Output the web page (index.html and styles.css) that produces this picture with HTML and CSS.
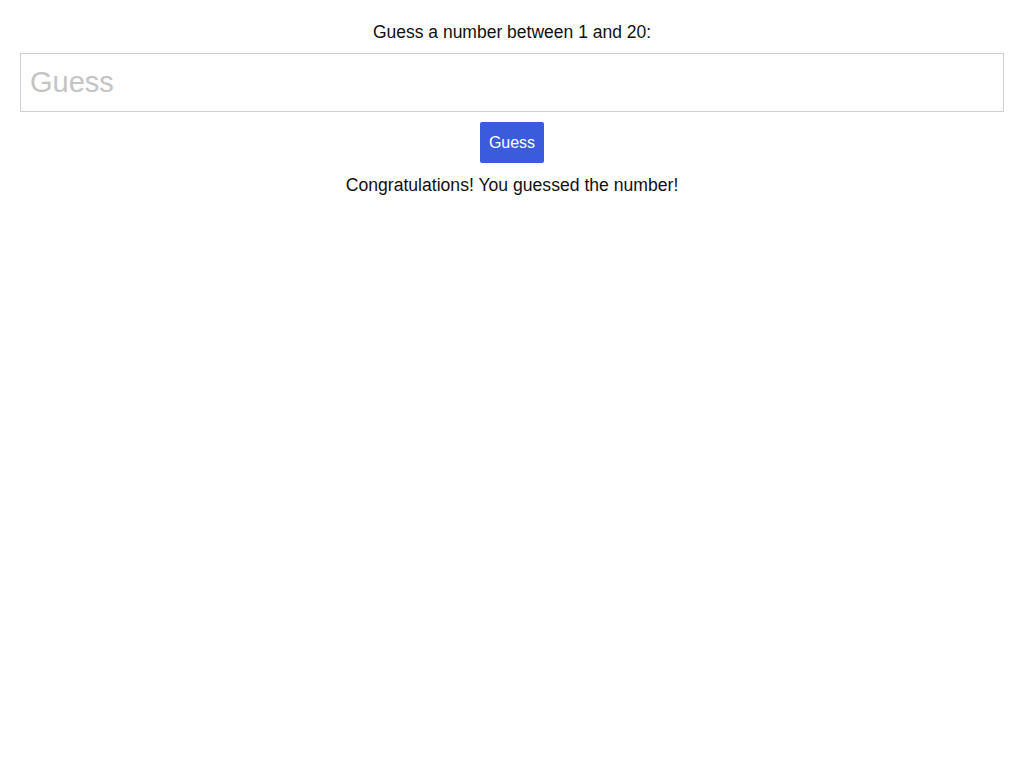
FILE: index.html
```html
<!DOCTYPE html>
<html>
<head>
<meta charset="utf-8">
<link rel="stylesheet" href="styles.css">
</head>
<body>
<div class="game">
  <p class="prompt">Guess a number between 1 and 20:</p>
  <input class="guess-input" type="text" placeholder="Guess">
  <button class="guess-btn">Guess</button>
  <p class="result">Congratulations! You guessed the number!</p>
</div>
</body>
</html>
```

FILE: styles.css
```css
html, body {
  margin: 0;
  padding: 0;
  background: #fff;
}
body {
  font-family: "Liberation Sans", Arial, sans-serif;
  color: #111;
}
.game {
  padding: 20px 20px;
  display: flex;
  flex-direction: column;
  align-items: center;
}
.prompt {
  margin: 0;
  font-size: 17.5px;
  line-height: 24px;
}
.guess-input {
  box-sizing: border-box;
  width: 100%;
  height: 59px;
  margin-top: 9px;
  border: 1px solid #d0d0d0;
  padding: 0 9px;
  font-family: "Liberation Sans", Arial, sans-serif;
  font-size: 29px;
  color: #111;
  outline: none;
}
.guess-input::placeholder {
  color: #c4c4c4;
}
.guess-btn {
  margin-top: 10px;
  height: 41px;
  padding: 0 9px;
  border: none;
  border-radius: 2px;
  background: #3a5bdc;
  color: #fff;
  font-family: "Liberation Sans", Arial, sans-serif;
  font-size: 16px;
}
.result {
  margin: 10px 0 0;
  font-size: 17.6px;
  line-height: 24px;
}
```
